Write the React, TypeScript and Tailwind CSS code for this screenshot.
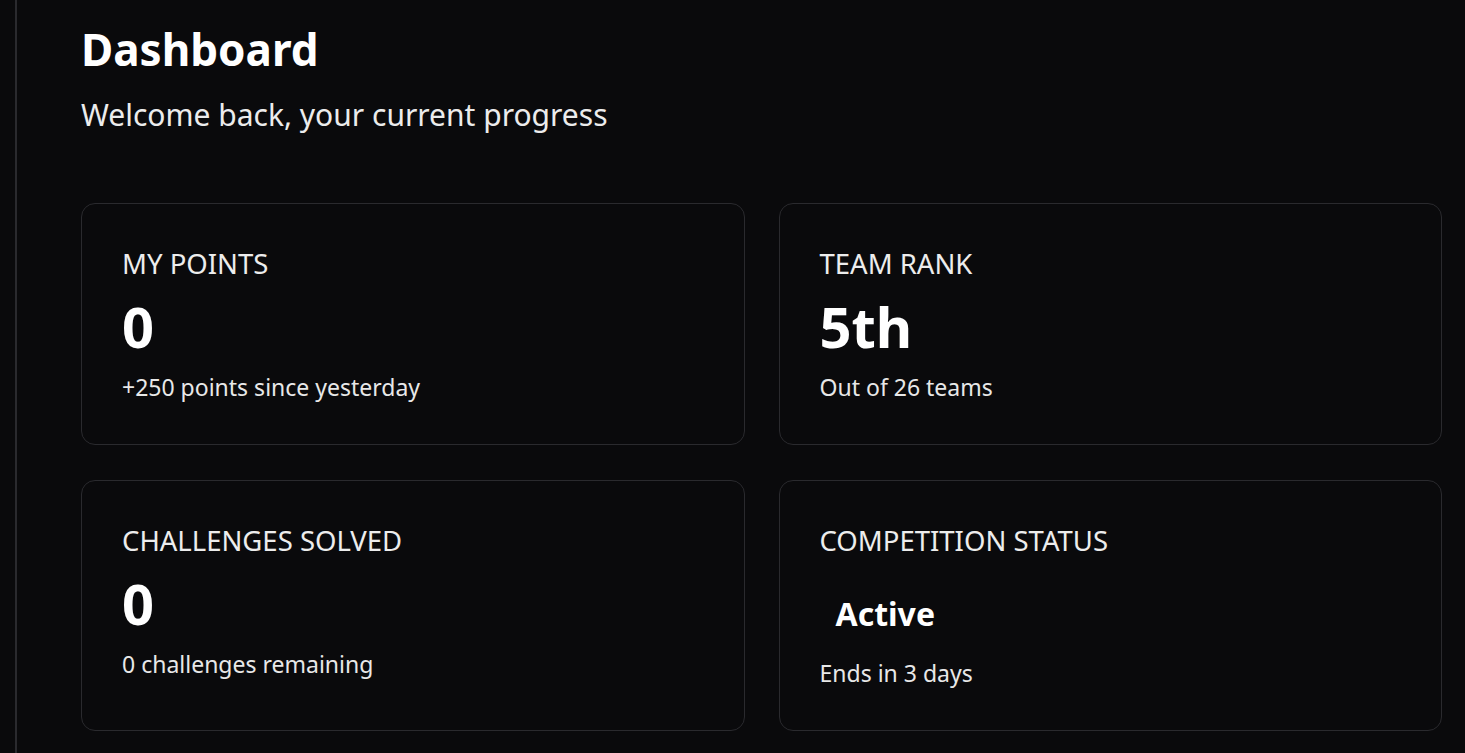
import React from "react";

function Card({
  label,
  value,
  sub,
}: {
  label: string;
  value: React.ReactNode;
  sub: string;
}) {
  return (
    <div className="rounded-[14px] border border-[#2a2a2e] bg-[#0a0a0c] p-10">
      <div className="text-[27.5px] leading-[39px] text-[#ededed]">{label}</div>
      <div className="mt-[15px] text-[56px] font-bold leading-[56px] text-white">{value}</div>
      <div className="mt-[17px] text-[23px] leading-[33px] text-[#e8e8e8]">{sub}</div>
    </div>
  );
}

export default function App() {
  return (
    <div
      className="min-h-[753px] w-full bg-[#0a0a0c] text-white"
      style={{ fontFamily: '"Noto Sans", "Open Sans", sans-serif' }}
    >
      <div className="ml-[15px] min-h-[753px] border-l-2 border-[#2a2a2e] pl-[64px] pr-[23px] pt-[25px]">
        <h1 className="text-[44px] font-bold leading-[48px] text-white">Dashboard</h1>
        <p className="mt-[21px] text-[30px] leading-[42px] text-[#ececec]">
          Welcome back, your current progress
        </p>
        <div className="mt-[67px] grid grid-cols-2 gap-x-[34px] gap-y-[35px]">
          <Card label="MY POINTS" value="0" sub="+250 points since yesterday" />
          <Card label="TEAM RANK" value="5th" sub="Out of 26 teams" />
          <Card label="CHALLENGES SOLVED" value="0" sub="0 challenges remaining" />
          <div className="rounded-[14px] border border-[#2a2a2e] bg-[#0a0a0c] p-10">
            <div className="text-[27.5px] leading-[39px] text-[#ededed]">COMPETITION STATUS</div>
            <div className="mt-[30px] px-4 text-[32px] font-bold leading-[48px] text-white">Active</div>
            <div className="mt-[19px] text-[23px] leading-[33px] text-[#e8e8e8]">Ends in 3 days</div>
          </div>
        </div>
      </div>
    </div>
  );
}
